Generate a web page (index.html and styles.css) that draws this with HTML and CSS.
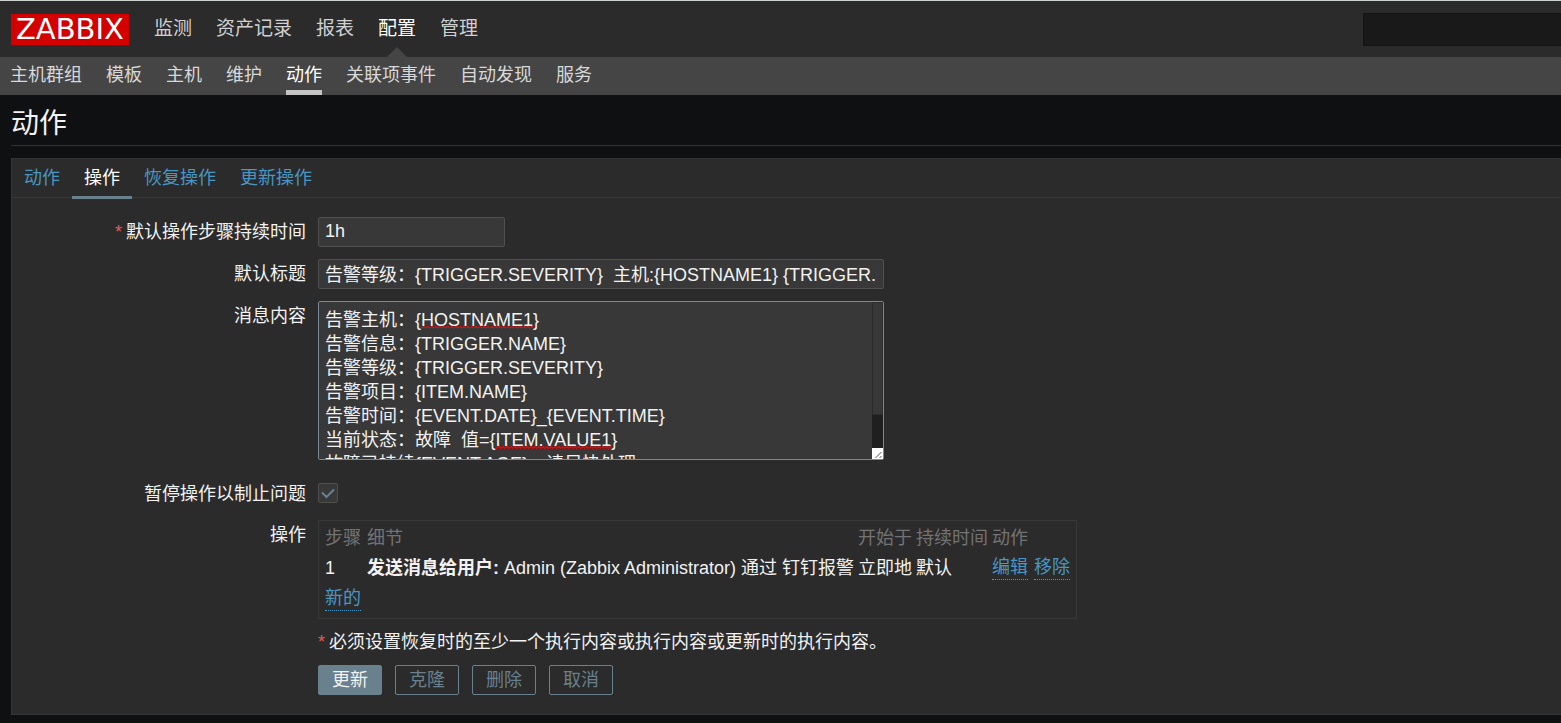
FILE: index.html
```html
<!DOCTYPE html>
<html lang="zh-CN">

<head>
    <meta charset="UTF-8">
    <meta name="viewport" content="width=device-width, initial-scale=1.0">
    <title>动作</title>
    <link rel="stylesheet" href="styles.css">
</head>

<body>
    <header class="header">
        <a href="#" class="logo">ZABBIX</a>
        <nav class="top-nav">
            <a href="#">监测</a>
            <a href="#">资产记录</a>
            <a href="#">报表</a>
            <a href="#" class="selected">配置</a>
            <a href="#">管理</a>
        </nav>
        <input type="text" class="search" aria-label="搜索">
    </header>

    <nav class="sub-nav">
        <a href="#">主机群组</a>
        <a href="#">模板</a>
        <a href="#">主机</a>
        <a href="#">维护</a>
        <a href="#" class="selected">动作</a>
        <a href="#">关联项事件</a>
        <a href="#">自动发现</a>
        <a href="#">服务</a>
    </nav>

    <main class="content">
        <h1 class="title">动作</h1>

        <div class="panel">
            <div class="tabs">
                <a href="#">动作</a>
                <a href="#" class="active">操作</a>
                <a href="#">恢复操作</a>
                <a href="#">更新操作</a>
            </div>

            <form class="form">
                <label for="period" class="required">默认操作步骤持续时间</label>
                <input type="text" id="period" class="field field-small" value="1h">

                <label for="subject">默认标题</label>
                <input type="text" id="subject" class="field" value="告警等级：{TRIGGER.SEVERITY}  主机:{HOSTNAME1} {TRIGGER.NAME}">

                <label for="message">消息内容</label>
                <div class="message">
                    <textarea id="message" class="field" spellcheck="false">
告警主机：{HOSTNAME1}
告警信息：{TRIGGER.NAME}
告警等级：{TRIGGER.SEVERITY}
告警项目：{ITEM.NAME}
告警时间：{EVENT.DATE}_{EVENT.TIME}
当前状态：故障  值={ITEM.VALUE1}
故障已持续{EVENT.AGE}，请尽快处理
</textarea>
                    <span class="misspelt misspelt-host"></span>
                    <span class="misspelt misspelt-value"></span>
                    <div class="scrollbar">
                        <div class="thumb"></div>
                        <svg class="resizer" viewBox="0 0 10 11" width="11" height="11">
                            <path d="M3 10 L9 4 M7 10 L9 8" fill="none" stroke="#555" />
                        </svg>
                    </div>
                </div>

                <label for="pause" class="check-label">暂停操作以制止问题</label>
                <div class="check-row">
                    <input type="checkbox" id="pause" class="checkbox" checked>
                    <svg class="tick" viewBox="0 0 20 20" width="20" height="20">
                        <path d="M4 9.5 L8.5 14 L16 6.5" fill="none" stroke="#69808d" stroke-width="2" />
                    </svg>
                </div>

                <span class="label">操作</span>
                <div class="operations">
                    <table>
                        <thead>
                            <tr>
                                <th class="col-step">步骤</th>
                                <th>细节</th>
                                <th>开始于</th>
                                <th>持续时间</th>
                                <th>动作</th>
                            </tr>
                        </thead>
                        <tbody>
                            <tr>
                                <td>1</td>
                                <td><b>发送消息给用户:</b> Admin (Zabbix Administrator) 通过 钉钉报警</td>
                                <td>立即地</td>
                                <td>默认</td>
                                <td class="actions">
                                    <button type="button" class="link">编辑</button>
                                    <button type="button" class="link">移除</button>
                                </td>
                            </tr>
                            <tr>
                                <td colspan="5"><button type="button" class="link">新的</button></td>
                            </tr>
                        </tbody>
                    </table>
                </div>

                <p class="note required">必须设置恢复时的至少一个执行内容或执行内容或更新时的执行内容。</p>

                <div class="buttons">
                    <button type="submit" class="btn btn-main">更新</button>
                    <button type="button" class="btn">克隆</button>
                    <button type="button" class="btn">删除</button>
                    <button type="button" class="btn">取消</button>
                </div>
            </form>
        </div>
    </main>
</body>

</html>
```
FILE: styles.css
```css
* {
    box-sizing: border-box;
}

body {
    margin: 0;
    background-color: #0e1012;
    color: #f2f2f2;
    font-family: "Liberation Sans", "Noto Sans CJK SC", sans-serif;
    font-size: 18px;
    line-height: 24px;
}

a {
    text-decoration: none;
}

input,
textarea,
button {
    font: inherit;
    color: inherit;
}

/* header */
.header {
    display: flex;
    align-items: center;
    height: 57px;
    padding-left: 11px;
    border-top: 1px solid #ccd2cf;
    background-color: #2b2b2b;
}

.logo {
    padding: 0 5px;
    background-color: #d40000;
    color: #fff;
    font-family: "DejaVu Sans", sans-serif;
    font-size: 29px;
    line-height: 31px;
}

.top-nav {
    display: flex;
    gap: 24px;
    align-self: stretch;
    margin-left: 25px;
    font-size: 19px;
    line-height: 56px;
}

.top-nav a {
    position: relative;
    color: #d0d0d0;
}

.top-nav .selected,
.sub-nav .selected {
    color: #fff;
}

.top-nav .selected::after {
    content: "";
    position: absolute;
    bottom: 0;
    left: 50%;
    margin-left: -10px;
    border: 10px solid transparent;
    border-top: 0;
    border-bottom-color: #454545;
}

.search {
    width: 198px;
    height: 33px;
    margin-left: auto;
    border: 1px solid #121212;
    border-right: 0;
    border-radius: 2px 0 0 2px;
    background-color: #191919;
}

.sub-nav {
    display: flex;
    gap: 24px;
    height: 38px;
    padding-left: 10px;
    background-color: #454545;
    line-height: 37px;
}

.sub-nav a {
    color: #d8d8d8;
}

.sub-nav .selected {
    border-bottom: 5px solid #c4c4c4;
}

/* page */
.content {
    padding: 0 0 8px 11px;
}

.title {
    margin: 0 0 12px;
    padding: 9px 0 1px;
    border-bottom: 1px solid #303030;
    font-size: 28px;
    font-weight: normal;
    line-height: 40px;
}

.panel {
    border: 1px solid #353535;
    border-right: 0;
    background-color: #2b2b2b;
}

.tabs {
    display: flex;
    height: 39px;
    border-bottom: 1px solid #383838;
    line-height: 38px;
}

.tabs a {
    height: 40px;
    padding: 0 12px;
    color: #4796c4;
}

.tabs .active {
    border-bottom: 3px solid #69808d;
    color: #fff;
}

/* form */
.form {
    display: grid;
    grid-template-columns: 294px minmax(0, 1fr);
    gap: 12px;
    padding: 19px 0;
}

.form > label,
.label {
    padding-top: 3px;
    text-align: right;
}

.form > .check-label {
    padding-top: 0;
}

.required::before {
    content: "*";
    margin-right: 4px;
    color: #e45959;
}

.field {
    width: 566px;
    max-width: 100%;
    height: 30px;
    padding: 0 6px 2px;
    border: 1px solid #4f4f4f;
    border-radius: 2px;
    outline: 0;
    background-color: #383838;
}

.field-small {
    width: 187px;
}

.message {
    position: relative;
    width: 566px;
    max-width: 100%;
    margin-bottom: 10px;
}

.message .field {
    display: block;
    width: 100%;
    height: 159px;
    padding: 6px 18px 6px 6px;
    border-color: #768d99;
    resize: none;
    scrollbar-width: none;
}

.scrollbar {
    position: absolute;
    top: 1px;
    right: 1px;
    bottom: 1px;
    display: flex;
    flex-direction: column;
    width: 11px;
    background-color: #1f1f1f;
    pointer-events: none;
}

.thumb {
    height: 113px;
    border: 1px solid #2b2b2b;
    background-color: #383838;
}

.resizer {
    margin-top: auto;
    background-color: #fff;
}

/* spelling marks under the macro names */
.misspelt {
    position: absolute;
    height: 3px;
    background: url("data:image/svg+xml,%3Csvg xmlns='http://www.w3.org/2000/svg' width='4' height='3'%3E%3Cpath d='M0 1h2v1h-2zM2 0h2v1h-2zM1 1h3v1h-3zM0 2h1v1h-1z' fill='%23f00000'/%3E%3C/svg%3E") repeat-x;
    pointer-events: none;
}

.misspelt-host {
    top: 25px;
    left: 103px;
    width: 112px;
}

.misspelt-value {
    top: 145px;
    left: 178px;
    width: 116px;
}

.check-row {
    position: relative;
    height: 26px;
    padding-top: 1px;
}

.checkbox {
    display: block;
    appearance: none;
    width: 20px;
    height: 20px;
    margin: 0;
    border: 1px solid #4f4f4f;
    border-radius: 2px;
    background-color: #383838;
}

.tick {
    position: absolute;
    top: 1px;
    left: 0;
    display: none;
    pointer-events: none;
}

.checkbox:checked + .tick {
    display: block;
}

.operations {
    justify-self: start;
    padding: 2px 6px 4px;
    border: 1px solid #383838;
}

.operations table {
    border-collapse: collapse;
}

.operations th,
.operations td {
    height: 31px;
    padding: 0 4px 0 0;
    text-align: left;
    white-space: nowrap;
}

.operations th {
    height: 29px;
    color: #737373;
    font-weight: normal;
}

.operations .col-step {
    width: 42px;
}

.operations .actions {
    display: flex;
    align-items: center;
    gap: 6px;
    padding: 0;
}

.link {
    padding: 0;
    border: 0;
    border-bottom: 1px dotted #4796c4;
    background: none;
    color: #4796c4;
    cursor: pointer;
}

.note {
    grid-column: 2;
    margin: 0;
    line-height: 22px;
}

.buttons {
    display: flex;
    grid-column: 2;
    gap: 13px;
}

.btn {
    height: 30px;
    padding: 0 13px;
    border: 1px solid #69808d;
    border-radius: 2px;
    background: none;
    color: #69808d;
    cursor: pointer;
}

.btn-main {
    background-color: #69808d;
    color: #f2f2f2;
}
```
